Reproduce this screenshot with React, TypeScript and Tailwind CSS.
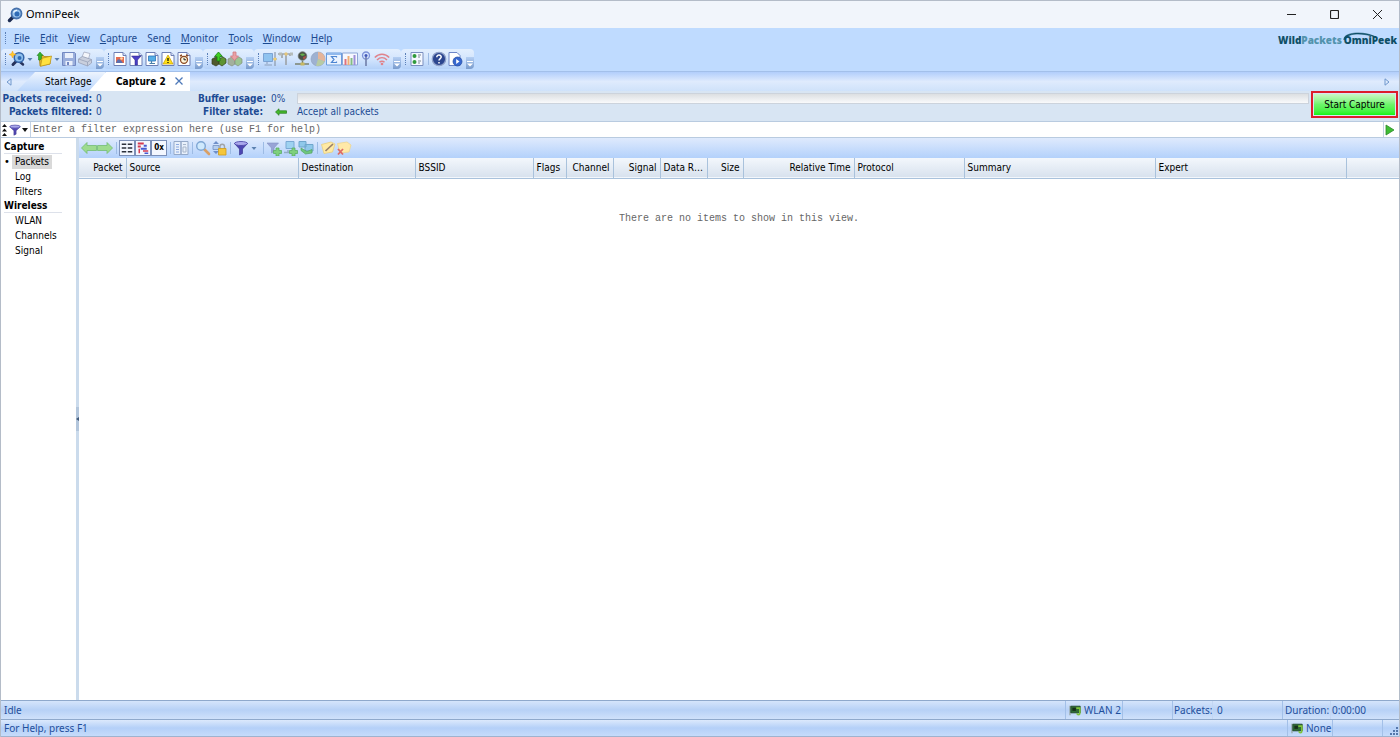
import { useState } from "react";
import type { ReactNode } from "react";

const menus = [
  ["", "F", "ile"],
  ["", "E", "dit"],
  ["", "V", "iew"],
  ["", "C", "apture"],
  ["Sen", "d", ""],
  ["", "M", "onitor"],
  ["", "T", "ools"],
  ["", "W", "indow"],
  ["", "H", "elp"],
];

const nav = [
  { title: "Capture", items: ["Packets", "Log", "Filters"] },
  { title: "Wireless", items: ["WLAN", "Channels", "Signal"] },
];

const columns = [
  { name: "Packet", width: 47, right: true },
  { name: "Source", width: 172 },
  { name: "Destination", width: 117 },
  { name: "BSSID", width: 118 },
  { name: "Flags", width: 33 },
  { name: "Channel", width: 47, right: true },
  { name: "Signal", width: 47, right: true },
  { name: "Data Rate", width: 47 },
  { name: "Size", width: 36, right: true },
  { name: "Relative Time", width: 111, right: true },
  { name: "Protocol", width: 110 },
  { name: "Summary", width: 191 },
  { name: "Expert", width: 191 },
];

function Svg({ children }: { children: ReactNode }) {
  return (
    <svg viewBox="0 0 16 16" className="size-4 shrink-0" fill="none" aria-hidden="true">
      {children}
    </svg>
  );
}

function Page({ children }: { children: ReactNode }) {
  return (
    <Svg>
      <path d="M2 1.5h9l3 3v10H2z" fill="#fff" stroke="#6c7fb5" />
      <path d="M11 1.5v3h3" fill="#dbe5fa" stroke="#6c7fb5" />
      {children}
    </Svg>
  );
}

const plus = "M10 8h3v2.5h2.5v3H13V16h-3v-2.5H7.5v-3H10z";

const icons: Record<string, ReactNode> = {
  lens: (
    <Svg>
      <path d="M6 10 2.5 13.500" stroke="#1c2c52" strokeWidth="3.500" strokeLinecap="round" />
      <circle cx="9.500" cy="6.500" r="5" fill="#9cc6ee" stroke="#4672ad" strokeWidth="1.800" />
      <circle cx="10" cy="7" r="2.500" fill="#2f6bb5" />
      <path d="M6.500 5.500c.6-1.500 2-2.300 3.500-2.100" stroke="#eef8ff" strokeWidth="1.300" />
    </Svg>
  ),
  newCapture: (
    <Svg>
      <path d="M10.500 10.500 14 13.500" stroke="#27335c" strokeWidth="2.500" strokeLinecap="round" />
      <path d="M7 10.500 4 13.500" stroke="#27335c" strokeWidth="3" strokeLinecap="round" />
      <circle cx="10" cy="6.500" r="4.800" fill="#8fc0ee" stroke="#3465a8" strokeWidth="1.500" />
      <circle cx="10.500" cy="7" r="2" fill="#2f6bb5" />
      <path d="m3.500 0 1 2.500L7 3.500 4.500 4.500l-1 2.500-1-2.500L0 3.500l2.500-1z" fill="#ffc928" stroke="#f29d1c" strokeWidth=".5" />
    </Svg>
  ),
  open: (
    <Svg>
      <path d="M3 4h4l1 1.500h6V13L4 15z" fill="#e2b62d" stroke="#a88112" strokeWidth=".7" />
      <path d="m4.500 15.300 1.500-8L15.500 5l-1.500 8z" fill="#ffe13f" stroke="#b98f16" strokeWidth=".7" />
      <path d="M2.500 9V4.500H1L4 1l3 3.500H5.500V7c0 1.500-1.500 2.500-3 2z" fill="#35b22c" stroke="#18781a" strokeWidth=".5" />
    </Svg>
  ),
  save: (
    <Svg>
      <path d="M1.500 1.500h12l1 1v12h-13z" fill="#9aaedb" stroke="#7288c2" />
      <path d="M4 2h8v5H4zM4.500 10h7v4.500h-7z" fill="#e9effb" />
      <path d="M6 11h2v3H6z" fill="#7288c2" />
    </Svg>
  ),
  print: (
    <Svg>
      <path d="m5 6 2-5 6 1.500L11.500 8z" fill="#f4f6fb" stroke="#a3abc0" strokeWidth=".8" />
      <path d="m1.500 8 4-2.500 9 3V12l-4 3-9-3.500z" fill="#c9cfdd" stroke="#98a1b8" strokeWidth=".8" />
      <path d="m1.500 8 9 3 4-2.500M10.500 11v4" stroke="#98a1b8" strokeWidth=".8" />
    </Svg>
  ),
  pageGraph: (
    <Page>
      <path d="M4 6h8v6H4z" fill="#e46b4f" />
      <path d="M4 12c1-4 3-5 5-2.500S11 12 12 12z" fill="#5c6fae" />
      <circle cx="9.500" cy="7.500" r="1.300" fill="#ffd9a8" />
    </Page>
  ),
  pageFilter: (
    <Page>
      <path d="M3.500 5h9.500L9.500 9v5H7V9z" fill="#4a3fc4" stroke="#2c2386" strokeWidth=".5" />
    </Page>
  ),
  pageMonitor: (
    <Page>
      <path d="M4.500 5h7v5h-7z" fill="#55aee6" stroke="#2f74b8" strokeWidth=".8" />
      <path d="M7.500 10v2M5.500 12.500H11" stroke="#4a7fa8" strokeWidth="1.200" />
    </Page>
  ),
  pageAlert: (
    <Page>
      <path d="m8 4 5 9H3z" fill="#ffe11a" stroke="#c79b00" strokeWidth=".7" />
      <path d="M8 7v3M8 11v1" stroke="#000" strokeWidth="1.200" />
    </Page>
  ),
  pageClock: (
    <Page>
      <path d="m4 5 2-1M12 5l-2-1" stroke="#8c4a22" strokeWidth="1.500" />
      <circle cx="8" cy="8.800" r="3.500" fill="#fff6da" stroke="#8c4a22" strokeWidth="1.300" />
      <path d="M8 6.800v2h2" stroke="#222" />
    </Page>
  ),
  insert: (
    <Svg>
      <path d="m1 8 4-2 3 2v5l-3 2-4-2z" fill="#4e5a2e" stroke="#333d1c" strokeWidth=".7" />
      <path d="m8 8 4-2 3 2v4l-4 3-3-2z" fill="#5e9432" stroke="#333d1c" strokeWidth=".7" />
      <path d="M6 10V5.500H3.500L7.500 1l4 4.500H9V10z" fill="#3fd021" stroke="#157a12" strokeWidth=".8" />
    </Svg>
  ),
  remove: (
    <Svg>
      <path d="m1 8 4-2 3 2v5l-3 2-4-2z" fill="#a3b09c" stroke="#82907e" strokeWidth=".7" />
      <path d="m8 8 4-2 3 2v4l-4 3-3-2z" fill="#9cc492" stroke="#82907e" strokeWidth=".7" />
      <path d="M6 1v4H3.500l4 4.500 4-4.500H9V1z" fill="#eaa1a4" stroke="#d07b84" strokeWidth=".8" />
    </Svg>
  ),
  nodeMonitor: (
    <Svg>
      <path d="M1.500 2.500h9v8h-9z" fill="#8fc3ef" stroke="#7ba3d4" />
      <path d="M5 11v2M2.500 14H10" stroke="#9fb3cf" strokeWidth="1.500" />
      <path d="M13 1v14M10.500 8H15" stroke="#8b98ab" strokeWidth="1.200" />
      <circle cx="13" cy="8" r="1.600" fill="#f3cf6c" />
    </Svg>
  ),
  protocols: (
    <Svg>
      <path d="M0 3h15M8 3v11M4 3v4M12 3v2" stroke="#9fa5ab" strokeWidth="1.700" />
      <circle cx="8" cy="3" r="1.700" fill="#e5c67a" />
      <path d="M1 1.500h3v3H1zM12 1.500h3v3h-3z" fill="#b5bcba" />
    </Svg>
  ),
  network: (
    <Svg>
      <circle cx="8.500" cy="5" r="4.300" fill="#4b5148" stroke="#6f7770" strokeWidth=".7" />
      <path d="M6 3.500C7.500 2 10 2 11 4L8 5z" fill="#65b04b" />
      <path d="m9 6 3-1c0 2-1 3-2.500 3.500z" fill="#b4524b" />
      <path d="M8.500 9.500V13M1 13h14" stroke="#7b826f" strokeWidth="1.500" />
      <path d="M6.500 11.500h4v3h-4z" fill="#c8b862" />
    </Svg>
  ),
  pie: (
    <Svg>
      <circle cx="8" cy="8" r="7" fill="#9eb1d1" stroke="#91a2bf" strokeWidth=".7" />
      <path d="M8 8V1a7 7 0 0 1 6.500 9.500z" fill="#e5b59a" />
      <path d="m8 8 6.500 2.500A7 7 0 0 1 6 14.700z" fill="#b7cba4" />
    </Svg>
  ),
  sigma: (
    <Svg>
      <path d="M.5 2h15v12H.5z" fill="#eaf3ff" stroke="#6b9ddd" />
      <path d="M1 3h14" stroke="#8fb8ec" strokeWidth="2" />
      <path d="M10.500 6.500v-1h-5L8 8.500 5.500 11.500h5v-1" stroke="#4d86d2" strokeWidth="1.200" />
    </Svg>
  ),
  bars: (
    <Svg>
      <path d="M.5 2h15v12H.5z" fill="#f5f8ff" stroke="#8ea7d6" />
      <path d="M3.500 14V8" stroke="#e0727c" strokeWidth="2" />
      <path d="M6.500 14V5" stroke="#f0ae74" strokeWidth="2" />
      <path d="M9.500 14V7" stroke="#84bd84" strokeWidth="2" />
      <path d="M12.500 14V4" stroke="#9c8ed6" strokeWidth="2" />
    </Svg>
  ),
  antenna: (
    <Svg>
      <circle cx="8" cy="4.500" r="3.500" fill="#d6e5ff" stroke="#7d92d9" strokeWidth="1.300" />
      <circle cx="8" cy="4.500" r="1.500" fill="#4258b8" />
      <path d="M8 6v9" stroke="#7583ad" strokeWidth="1.700" />
    </Svg>
  ),
  wifi: (
    <Svg>
      <path d="M.8 6.500c4-4.500 10.400-4.500 14.400 0M3 9c3-3 7-3 10 0M5.500 11.300c1.500-1.500 3.500-1.500 5 0" stroke="#e0838b" strokeWidth="1.500" />
      <circle cx="8" cy="13" r="1.300" fill="#e0838b" />
    </Svg>
  ),
  options: (
    <Svg>
      <path d="M2 1.500h12v13H2z" fill="#f4f8ff" stroke="#7b8fc0" />
      <circle cx="5.500" cy="5" r="2" fill="#2f9a3b" />
      <circle cx="5.500" cy="11" r="2" fill="#2f9a3b" />
      <path d="M9 4h3M9 6h2M9 10h3M9 12h2" stroke="#7d8796" />
    </Svg>
  ),
  help: (
    <Svg>
      <circle cx="8" cy="8" r="6.700" fill="#2c4690" stroke="#8fa0c8" strokeWidth="1.300" />
      <path d="M5.800 6.200c0-3 4.500-2.700 4.400-.2C10.200 7.500 8 7.700 8 9.500M8 11v1.500" stroke="#fff" strokeWidth="1.500" />
    </Svg>
  ),
  support: (
    <Svg>
      <path d="M2 1.500h8l3 3v10H2z" fill="#fff" stroke="#6c86c8" />
      <circle cx="10.500" cy="10.500" r="4.500" fill="#3767cf" stroke="#234a9f" strokeWidth=".7" />
      <path d="m9.200 8 3.300 2.500L9.200 13z" fill="#fff" />
    </Svg>
  ),
  back: (
    <Svg>
      <path d="M.5 8 6 2.500v3h9.500v5H6v3z" fill="#9ddb8f" stroke="#74bd75" strokeWidth=".8" />
    </Svg>
  ),
  forward: (
    <Svg>
      <path d="M15.500 8 10 2.500v3H.5v5H10v3z" fill="#9ddb8f" stroke="#74bd75" strokeWidth=".8" />
    </Svg>
  ),
  list: (
    <Svg>
      <path d="M1 3h6M9 3h6M1 8h6M9 8h6M1 13h6M9 13h6" stroke="#2b303c" strokeWidth="2" />
    </Svg>
  ),
  decode: (
    <Svg>
      <path d="M1 2h8M1 6h4" stroke="#d53b51" strokeWidth="2.500" />
      <path d="M5 9h8M9 5h4" stroke="#465ad0" strokeWidth="2.500" />
      <path d="M8 12h7M3 9v6" stroke="#d53b51" strokeWidth="2" />
      <path d="M10 15h5" stroke="#465ad0" strokeWidth="2" />
    </Svg>
  ),
  split: (
    <Svg>
      <path d="M1 1.500h14v13H1z" fill="#e8f0fb" stroke="#95a9c8" />
      <path d="M8 2v12" stroke="#95a9c8" strokeWidth="1.500" />
      <path d="M3 4.500h3M3 7h3M3 9.500h3M3 12h3" stroke="#8ba8df" />
      <path d="M10 4.500h3M10 7h3v5h-3z" stroke="#a8b6ca" />
    </Svg>
  ),
  find: (
    <Svg>
      <path d="m9 9 5 5" stroke="#d9a066" strokeWidth="2.600" strokeLinecap="round" />
      <circle cx="6" cy="6" r="4.300" fill="#cfe9fd" stroke="#7ea6d4" strokeWidth="1.400" />
    </Svg>
  ),
  lock: (
    <Svg>
      <path d="m2 4 3-3 3 3zM2 11l3 3 3-3z" fill="#6f8fc8" />
      <path d="M2 5.500h6v4H2z" fill="#b4cdee" stroke="#7591c2" strokeWidth=".8" />
      <path d="M9 9V6.500c0-3 4.500-3 4.500 0V9" stroke="#a0a4a8" strokeWidth="1.400" />
      <path d="M7.500 8.500H15v6.500H7.500z" fill="#f5c63b" stroke="#cf9a1d" strokeWidth=".8" />
    </Svg>
  ),
  funnel: (
    <Svg>
      <path d="M1.500 3.500 6.500 9v6l3-1.500V9l5-5.500z" fill="#4d46b2" stroke="#322c86" strokeWidth=".6" />
      <ellipse cx="8" cy="3.500" rx="6.500" ry="2" fill="#aaa8ec" stroke="#4640a4" strokeWidth=".8" />
    </Svg>
  ),
  funnelAdd: (
    <Svg>
      <path d="m1 3 4.500 5v5l2.500-1.500V8l4.500-5z" fill="#98a4d6" stroke="#8490c2" strokeWidth=".6" />
      <path d={plus} fill="#7fd07d" stroke="#55aa5b" strokeWidth=".7" />
    </Svg>
  ),
  nodeAdd: (
    <Svg>
      <path d="M4 1.500h8v7H4z" fill="#9ed2f1" stroke="#7aa9d4" />
      <path d="M6 10v2M2 12.500h7" stroke="#93acc5" strokeWidth="1.500" />
      <path d={plus} fill="#7fd07d" stroke="#55aa5b" strokeWidth=".7" />
    </Svg>
  ),
  nodes: (
    <Svg>
      <path d="M1 1.500h7v5.500H1zM7 4.500h8V11H7z" fill="#8fc8ea" stroke="#6fa6cc" />
      <path d="M3 8v2.500L7.500 14 14 13V9.500L9 11.500z" fill="#6fc77d" stroke="#51a363" strokeWidth=".7" />
    </Svg>
  ),
  note: (
    <Svg>
      <path d="M1.500 4.500 11 2l4 2-2.500 8L4 13.500z" fill="#ffeaa3" stroke="#e9cf7c" strokeWidth=".8" />
      <path d="m5.500 11 7.500-7" stroke="#97806b" strokeWidth="1.700" />
    </Svg>
  ),
  noteDelete: (
    <Svg>
      <path d="M1.500 3.500 11 2l4 3-2 7-9 1z" fill="#ffe9a8" stroke="#ecd592" strokeWidth=".8" />
      <path d="m2 9 5 5.500M7 9l-5 5.500" stroke="#dd6b66" strokeWidth="1.800" />
    </Svg>
  ),
};

function ToolButton({ icon, pressed }: { icon: string; pressed?: boolean }) {
  return (
    <button
      type="button"
      aria-label={icon}
      className={
        pressed
          ? "flex size-4 items-center justify-center border border-[#7c90b8] bg-[#f3f7ff] [&>svg]:size-3"
          : "flex size-4 items-center justify-center"
      }
    >
      {icons[icon]}
    </button>
  );
}

function Grip() {
  return <span className="mr-[3px] ml-1 h-3 w-px border-l border-dotted border-[#5b80b8]" />;
}

function Caret() {
  return (
    <svg viewBox="0 0 5 3" className="ml-px h-[3px] w-2 shrink-0" aria-hidden="true">
      <path d="M0 0h5L2.500 3z" fill="#5b80b0" />
    </svg>
  );
}

function Separator() {
  return <span className="mr-0.5 ml-[3px] h-3 w-px bg-[#9dbbe4]" />;
}

function AdapterIcon() {
  return (
    <svg viewBox="0 0 16 14" className="h-[11px] w-[13px] shrink-0" fill="none" aria-hidden="true">
      <path d="M1 1v12" stroke="#8d9a8b" strokeWidth="1.300" />
      <path d="M2 1.500h12v8.500H2z" fill="#2f6b35" stroke="#1d4524" />
      <path d="M4 3.500h4.500v4H4z" fill="#17301b" />
      <path d="M9 4h4.500v6.500c0 2.500-3.500 2.500-3.500 0" stroke="#7fc53a" strokeWidth="2" />
    </svg>
  );
}

function ToolGroup({ children }: { children: ReactNode }) {
  return (
    <div className="flex h-5 items-center rounded-sm bg-linear-to-b from-[#e3effe] via-[#d3e5fd] to-[#b4d1f8]">
      <Grip />
      {children}
      <button
        type="button"
        aria-label="Toolbar options"
        className="ml-[3px] flex h-3 w-2 items-end justify-center self-end rounded-br-sm bg-linear-to-b from-[#b5cff3] to-[#7a9ccd] pb-0.5"
      >
        <svg viewBox="0 0 6 6" className="size-1.5" aria-hidden="true">
          <path d="M0 0h6v1H0zM0 2.500h6L3 5.500z" fill="#fff" />
        </svg>
      </button>
    </div>
  );
}

function TitleBar() {
  return (
    <header className="flex h-[27px] items-center bg-[#f1f5fb] pl-1.5 font-['Noto_Sans',sans-serif] text-[11px] text-black">
      {icons.lens}
      <h1 className="ml-[3px]">OmniPeek</h1>
      <div className="ml-auto flex h-full">
        <button type="button" aria-label="Minimize" className="flex w-[43px] items-center justify-center">
          <svg viewBox="0 0 9 9" className="size-[9px]" stroke="#222">
            <path d="M0 4.500h9" />
          </svg>
        </button>
        <button type="button" aria-label="Maximize" className="flex w-[43px] items-center justify-center">
          <svg viewBox="0 0 9 9" className="size-[9px]" stroke="#222" fill="none">
            <rect x=".5" y=".5" width="8" height="8" rx="1" strokeWidth="1.200" />
          </svg>
        </button>
        <button type="button" aria-label="Close" className="flex w-[43px] items-center justify-center">
          <svg viewBox="0 0 9 9" className="size-[9px]" stroke="#222">
            <path d="m0 0 9 9M9 0 0 9" />
          </svg>
        </button>
      </div>
    </header>
  );
}

function MenuAndTools() {
  return (
    <div className="flex h-[43px] items-start justify-between bg-[#bfdbff]">
      <div>
        <nav className="flex h-5 items-center font-['Noto_Sans',sans-serif] text-[10px] text-[#1b4a90]">
          <Grip />
          {menus.map(([before, key, after]) => (
            <button key={before + key + after} type="button" className="px-[5px]">
              {before}
              <u>{key}</u>
              {after}
            </button>
          ))}
        </nav>
        <div className="flex items-center pt-px">
          <ToolGroup>
            <ToolButton icon="newCapture" />
            <Caret />
            <span className="w-0.5" />
            <ToolButton icon="open" />
            <Caret />
            <ToolButton icon="save" />
            <ToolButton icon="print" />
          </ToolGroup>
          <ToolGroup>
            <ToolButton icon="pageGraph" />
            <ToolButton icon="pageFilter" />
            <ToolButton icon="pageMonitor" />
            <ToolButton icon="pageAlert" />
            <ToolButton icon="pageClock" />
          </ToolGroup>
          <ToolGroup>
            <ToolButton icon="insert" />
            <ToolButton icon="remove" />
          </ToolGroup>
          <ToolGroup>
            <ToolButton icon="nodeMonitor" />
            <ToolButton icon="protocols" />
            <ToolButton icon="network" />
            <ToolButton icon="pie" />
            <ToolButton icon="sigma" />
            <ToolButton icon="bars" />
            <ToolButton icon="antenna" />
            <ToolButton icon="wifi" />
          </ToolGroup>
          <ToolGroup>
            <ToolButton icon="options" />
            <Separator />
            <ToolButton icon="help" />
            <ToolButton icon="support" />
          </ToolGroup>
        </div>
      </div>
      <div className="relative mt-1.5 mr-0.5 flex gap-0.5 font-['Open_Sans',sans-serif] text-[10px] leading-3 font-extrabold text-[#0e4f66]">
        <span>
          Wild<span className="text-[#5293ad]">Packets</span>
        </span>
        <span>OmniPeek</span>
        <svg viewBox="0 0 34 8" className="absolute -top-0.5 right-5 h-2 w-[34px]" fill="none" aria-hidden="true">
          <path d="M1 8C0 3 8 1 15 1s13 1.500 18 4C26 3 20 2 15 2S3 3 1 8z" fill="#0e4f66" stroke="#0e4f66" strokeWidth=".6" />
        </svg>
      </div>
    </div>
  );
}

function TabStrip() {
  return (
    <div className="flex h-5 items-end border-t border-[#a3c0ea] bg-linear-to-b from-[#b2cefb] via-[#dfebfd] to-[#cfe2fa] font-['DejaVu_Sans_Condensed','DejaVu_Sans',sans-serif] text-[10px] text-black">
      <button type="button" aria-label="Previous tab" className="flex h-full w-4 items-center justify-center">
        <svg viewBox="0 0 6 8" className="h-2 w-1.5" fill="none" stroke="#6f97cc">
          <path d="M5 .8v6.400L1 4z" />
        </svg>
      </button>
      <button
        type="button"
        className="h-[19px] w-[88px] bg-linear-to-b from-[#edf4fe] to-[#b9d5fb] pb-px pl-7 text-left [clip-path:polygon(0_100%,18px_0,100%_0,100%_100%)]"
      >
        Start Page
      </button>
      <div className="-ml-4 flex h-[19px] w-[101px] items-center bg-white pb-px pl-[27px] [clip-path:polygon(0_100%,17px_0,100%_0,100%_100%)]">
        <button type="button" className="font-bold">
          Capture 2
        </button>
        <button type="button" aria-label="Close tab" className="mr-[7px] ml-auto">
          <svg viewBox="0 0 8 8" className="size-2" stroke="#4d78b8" strokeWidth="1.300">
            <path d="m.5.5 7 7M7.500.5l-7 7" />
          </svg>
        </button>
      </div>
      <button type="button" aria-label="Next tab" className="ml-auto flex h-full w-6 items-center justify-center">
        <svg viewBox="0 0 6 8" className="h-2 w-1.5" fill="none" stroke="#6f97cc">
          <path d="M1 .8v6.400L5 4z" />
        </svg>
      </button>
    </div>
  );
}

function CaptureInfo() {
  return (
    <section className="flex h-[30px] bg-[#d8e5f3] font-['DejaVu_Sans_Condensed','DejaVu_Sans',sans-serif] text-[10px] leading-[13px] text-[#1d4b94]">
      <dl className="grid w-[197px] shrink-0 grid-cols-[91px_auto] content-start gap-x-1 pt-px">
        <dt className="text-right font-bold whitespace-nowrap">Packets received:</dt>
        <dd>0</dd>
        <dt className="text-right font-bold whitespace-nowrap">Packets filtered:</dt>
        <dd>0</dd>
      </dl>
      <dl className="grid flex-1 grid-cols-[65px_auto] content-start gap-x-2 pt-px">
        <dt className="text-right font-bold whitespace-nowrap">Buffer usage:</dt>
        <dd className="flex items-center">
          <span className="w-[26px]">0%</span>
          <span
            role="progressbar"
            aria-valuenow={0}
            aria-label="Buffer usage"
            className="h-[11px] flex-1 border border-[#ccd3dc] bg-linear-to-b from-[#dcdfe2] to-[#f9fafb]"
          />
        </dd>
        <dt className="text-right font-bold whitespace-nowrap">Filter state:</dt>
        <dd className="flex items-center">
          <svg viewBox="0 0 12 8" className="mr-2.5 ml-1 h-2 w-3" aria-hidden="true">
            <path d="M.5 4 4 .8v2h7.500v2.500H4v2z" fill="#46b92c" stroke="#24781b" strokeWidth=".7" />
          </svg>
          Accept all packets
        </dd>
      </dl>
      <div className="mr-px ml-0.5 flex h-[27px] w-[87px] shrink-0 border-2 border-[#dc1c2c] p-px">
        <button
          type="button"
          className="flex-1 bg-linear-to-b from-[#c9f7c6] via-[#6cf56a] to-[#0df20d] text-black"
        >
          Start Capture
        </button>
      </div>
    </section>
  );
}

function FilterBar() {
  return (
    <form className="flex h-[17px] items-center border-y border-[#b9cbe0] bg-white" onSubmit={(e) => e.preventDefault()}>
      <svg viewBox="0 0 6 12" className="ml-px h-3 w-1.5 shrink-0" aria-hidden="true">
        <path d="M0 3h5L2.500 0zM0 7.500h5L2.500 4.500zM0 12h5L2.500 9z" fill="#111" />
      </svg>
      <button type="button" aria-label="Filter" className="flex h-full w-[23px] items-center gap-px border-r border-[#c3d2e4]">
        <svg viewBox="0 0 16 16" className="ml-px size-3" aria-hidden="true">
          <path d="M1 3.500 6.500 9v6l3-1.500V9L15 3.500z" fill="#5448b4" stroke="#322c86" strokeWidth=".6" />
          <ellipse cx="8" cy="3.500" rx="7" ry="2" fill="#aaa8ec" stroke="#4640a4" />
        </svg>
        <svg viewBox="0 0 6 4" className="h-1 w-1.5" aria-hidden="true">
          <path d="M0 0h6L3 4z" fill="#111" />
        </svg>
      </button>
      <input
        aria-label="Filter expression"
        placeholder="Enter a filter expression here (use F1 for help)"
        className="h-full min-w-0 flex-1 px-0.5 font-['Liberation_Mono',monospace] text-[10px] outline-none placeholder:text-[#666]"
      />
      <button type="submit" aria-label="Apply filter" className="flex h-full w-4 items-center justify-center border-l border-[#c3d2e4]">
        <svg viewBox="0 0 10 12" className="mr-1 h-3 w-2.5" aria-hidden="true">
          <path d="M1 1v10l8-5z" fill="#3fbd35" stroke="#2b8a28" strokeWidth=".8" />
        </svg>
      </button>
    </form>
  );
}

function Sidebar() {
  const [active, setActive] = useState("Packets");
  return (
    <aside className="w-[75px] shrink-0 bg-white pt-0.5 pl-[3px] font-['DejaVu_Sans_Condensed','DejaVu_Sans',sans-serif] text-[10px] text-black">
      {nav.map((group) => (
        <section key={group.title}>
          <h2 className="h-3.5 w-[58px] border-b border-[#dde1ea] leading-[13px] font-bold">{group.title}</h2>
          <ul>
            {group.items.map((item) => (
              <li key={item} className="flex h-[15px] items-center">
                <span className="w-2 text-[11px] leading-none">{item === active ? "•" : ""}</span>
                <button
                  type="button"
                  onClick={() => setActive(item)}
                  className={item === active ? "bg-[#d9d9d9] px-[3px] leading-[14px]" : "px-[3px] leading-[14px]"}
                >
                  {item}
                </button>
              </li>
            ))}
          </ul>
        </section>
      ))}
    </aside>
  );
}

function PacketTools() {
  return (
    <div className="flex h-5 items-center bg-linear-to-b from-[#dfeafd] to-[#b3d1fb] pl-0.5">
      <ToolButton icon="back" />
      <ToolButton icon="forward" />
      <Separator />
      <ToolButton icon="list" pressed />
      <ToolButton icon="decode" pressed />
      <button
        type="button"
        className="size-4 border border-[#7c90b8] bg-[#f3f7ff] font-['DejaVu_Sans_Condensed','DejaVu_Sans',sans-serif] text-[8px] leading-none font-bold text-black"
      >
        0x
      </button>
      <Separator />
      <ToolButton icon="split" />
      <Separator />
      <ToolButton icon="find" />
      <ToolButton icon="lock" />
      <Separator />
      <ToolButton icon="funnel" />
      <Caret />
      <span className="w-0.5" />
      <Separator />
      <ToolButton icon="funnelAdd" />
      <ToolButton icon="nodeAdd" />
      <ToolButton icon="nodes" />
      <Separator />
      <ToolButton icon="note" />
      <ToolButton icon="noteDelete" />
    </div>
  );
}

function PacketTable() {
  return (
    <table className="w-full table-fixed border-collapse font-['DejaVu_Sans_Condensed','DejaVu_Sans',sans-serif] text-[10px] text-black">
      <colgroup>
        {columns.map((c) => (
          <col key={c.name} style={{ width: c.width }} />
        ))}
        <col />
      </colgroup>
      <thead>
        <tr className="h-5 border-b border-[#a9c2dc] bg-linear-to-b from-[#f3f7fc] to-[#d8e2ee]">
          {columns.map((c) => (
            <th
              key={c.name}
              scope="col"
              className={
                c.right
                  ? "truncate border-r border-[#a9c2dc] pr-[3px] text-right font-normal"
                  : "truncate border-r border-[#a9c2dc] pl-[3px] text-left font-normal"
              }
            >
              {c.name}
            </th>
          ))}
          <td />
        </tr>
      </thead>
      <tbody>
        <tr>
          <td
            colSpan={columns.length + 1}
            className="pt-8 text-center font-['Liberation_Mono',monospace] text-[#666]"
          >
            There are no items to show in this view.
          </td>
        </tr>
      </tbody>
    </table>
  );
}

function StatusBars() {
  return (
    <footer className="bg-[#bdd7fb] font-['Noto_Sans',sans-serif] text-[10px] text-[#1f4f9c]">
      <div className="flex h-[19px] border-t border-[#8fa9cc] bg-linear-to-b from-[#d5e5fb] via-[#b7d1f6] to-[#cfe1fb] leading-[18px]">
        <span className="flex-1 pl-[3px]">Idle</span>
        <span className="flex w-[58px] items-center gap-0.5 border-x border-[#a3c0e8] pl-[3px] whitespace-nowrap">
          <AdapterIcon />
          WLAN 2
        </span>
        <span className="w-[50px] border-r border-[#a3c0e8]" />
        <span className="w-10 border-r border-[#c3d6f3] pl-px">Packets:</span>
        <span className="w-[70px] border-r border-[#a3c0e8] pl-1">0</span>
        <span className="w-[47px] pl-0.5">Duration:</span>
        <span className="w-[69px] border-l border-[#c3d6f3] pl-px">0:00:00</span>
      </div>
      <div className="flex h-[18px] border-y border-t-[#8fa9cc] border-b-[#9fb3cf] bg-linear-to-b from-[#dce9fc] via-[#b4d0f8] to-[#c6dcfb] leading-[17px]">
        <span className="flex-1 pl-[3px]">For Help, press F1</span>
        <span className="flex w-[46px] items-center gap-0.5 border-x border-[#a3c0e8] pl-[3px]">
          <AdapterIcon />
          None
        </span>
        <span className="w-[50px] border-r border-[#a3c0e8]" />
        <span className="flex w-4 items-end justify-end">
          <svg viewBox="0 0 10 10" className="size-2.5" aria-hidden="true">
            <path d="M7 1h2v2H7zM4 4h2v2H4zM7 4h2v2H7zM1 7h2v2H1zM4 7h2v2H4zM7 7h2v2H7z" fill="#5577ab" />
          </svg>
        </span>
      </div>
    </footer>
  );
}

export default function App() {
  return (
    <div className="flex min-h-screen flex-col border-x border-t border-[#b4bcc8] bg-white">
      <TitleBar />
      <MenuAndTools />
      <TabStrip />
      <CaptureInfo />
      <FilterBar />
      <div className="flex flex-1">
        <Sidebar />
        <div className="flex w-[3px] shrink-0 items-center bg-[#cbdbec]">
          <button type="button" aria-label="Collapse sidebar" className="flex h-6 w-full items-center bg-[#b3c6dc]">
            <svg viewBox="0 0 3 4" className="h-1 w-[3px]" aria-hidden="true">
              <path d="M3 0v4L0 2z" fill="#41597a" />
            </svg>
          </button>
        </div>
        <main className="min-w-0 flex-1">
          <PacketTools />
          <PacketTable />
        </main>
      </div>
      <StatusBars />
    </div>
  );
}
